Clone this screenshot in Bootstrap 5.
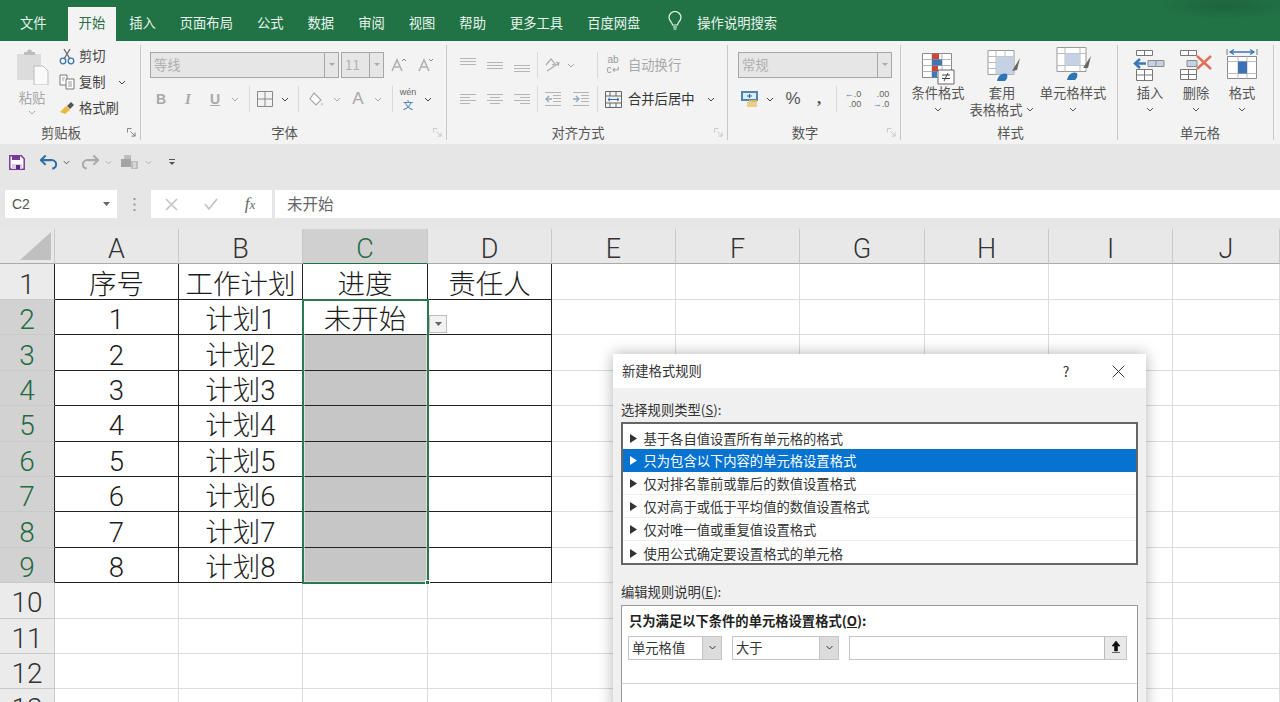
<!DOCTYPE html>
<html lang="zh-CN">
<head>
<meta charset="utf-8">
<title>新建格式规则</title>
<link href="https://cdn.jsdelivr.net/npm/bootstrap@5.3.0/dist/css/bootstrap.min.css" rel="stylesheet">
<style>
html,body{height:702px;overflow:hidden}
body{font-family:"Noto Sans CJK SC","Liberation Sans",sans-serif;font-size:13.3px;color:#444;background:#fff;line-height:1.2}
svg{display:block;flex:none}
.tabbar{height:41px;background:#217346 radial-gradient(ellipse 70px 14px at 1225px 6px,rgba(0,0,0,.14),transparent);color:#e9f3ed;padding-left:8px}
.tabitem{padding:0 12px;height:34px;line-height:31px;white-space:nowrap}
.tabitem.first{margin-right:9px}
.tabitem.on{background:#f3f3f3;color:#2c6e49;padding:0 11px;margin-right:1px}
.bulb{margin:0 15px 0 16px;height:34px}
.ribbon{height:103px;background:#f3f3f3;padding-top:4px}
.grp{height:95px;border-right:1px solid #c8c8c8;flex:none}
.g1{width:141px}.g2{width:306px}.g3{width:281px}.g4{width:173px}.g5{width:217px;padding-left:3px}.g6{width:156px;padding-left:9px}
.rowa{height:26px;margin-top:7px}
.rowb{height:26px;margin-top:8px}
.grpbody{height:80px}
.cap{height:15px;line-height:15px;margin-top:auto;color:#555}
.capt{flex:1;text-align:center}
.launch{width:18px}
.slot{display:flex;align-items:center;justify-content:center;flex:none;height:100%}
.vs{width:1px;height:26px;background:#d8d8d8;flex:none}
.combo{height:26px;background:#e6e6e6;border:1px solid #a6a6a6;color:#b0b0b0;flex:none;line-height:24px;padding-left:3px}
.comboarrow{width:14px;border-left:1px solid #a6a6a6;height:100%;margin-left:auto;flex:none}
.small-row{height:22px;margin-bottom:4px}
.big{flex:none;text-align:center;line-height:17px;color:#555}
.dis,.big.dis{color:#a8a8a8}
.bigicon{height:39px;margin-bottom:0}
.qat{height:46px;background:#e6e6e6;padding:10px 0 0 9px}
.fbar{height:28px;background:#e6e6e6}
.namebox{width:112px;margin-left:5px;background:#fff;padding:0 7px;font-family:"Liberation Sans",sans-serif;font-size:14px;color:#555}
.fbtns{width:121px;background:#fff;margin-right:3px}
.finput{background:#fff;padding-left:12px;font-size:15.5px;color:#666;line-height:26px}
.gapbar{height:11px;background:#e6e6e6}
.sheetwrap{height:473px;overflow:hidden}
.sheet{border-collapse:separate;border-spacing:0;table-layout:fixed;width:1280px;font-family:Roboto,"Noto Sans CJK SC",sans-serif;font-size:27.5px;color:#1c1c1c;font-weight:300}
.sheet td,.sheet th{padding:6px 0 0;height:35.4px;line-height:28px;text-align:center;border-right:1px solid #dcdcdc;border-bottom:1px solid #dcdcdc;font-weight:300;white-space:nowrap}
.sheet tbody tr:first-child>*{height:36px}
.sheet thead th{height:35px;background:#e8e8e8;border-right:1px solid #c9c9c9;border-bottom:1px solid #aaa;color:#333;font-size:27px;padding-top:6px}
.sheet tbody th{background:#ebebeb;border-right:1px solid #c9c9c9;border-bottom:1px solid #c9c9c9;color:#333;font-size:28px}
.sheet thead th.sel{background:#d0d0d0;color:#1f6b42;border-bottom-color:#217346}
.sheet tbody th.sel{background:#d2d2d2;color:#1f6b42}
.sheet tbody th.k{border-right-color:#222}
.sheet td.k{border-right-color:#222;border-bottom-color:#222}
.sheet td.fill{background:#c6c6c6}
.selbox{left:302px;top:70px;width:127px;height:285px;border:2px solid #2a7a50;pointer-events:none;outline:1px solid rgba(255,255,255,.4);outline-offset:-3px}
.handle{right:-3px;bottom:-3px;width:5px;height:5px;background:#217346;border:1px solid #fff}
.ddarrow{left:429px;top:86px;width:18px;height:18px;background:#f2f2f2;border:1px solid #bdbdbd}
.dialog{left:613px;top:125px;width:533px;height:360px;background:#f0f0f0;box-shadow:0 0 14px rgba(0,0,0,.3);font-size:13.3px;color:#333}
.dlgtitle{height:34px;background:#fff;padding-left:9px;padding-right:21px}
.dlghelp{width:10px;margin-right:41px;font-size:14px;text-align:center}
.dlgbody{padding:14px 8px 0 8px}
.rulelist{border:2px solid #666;border-radius:0;background:#fff;height:143px;padding-top:3px;margin-top:4px}
.rulelist .list-group-item{border:0;border-bottom:1px solid #eee;border-radius:0;padding:2px 0 0 7px;height:23px;line-height:21px;background:transparent;color:#333;font-size:13.3px;margin:0;display:flex;align-items:center}
.rulelist .list-group-item.active{background:#0573cf;color:#fff;border-color:#0573cf}
.tri{margin-right:6.500px}
.lbl2{margin-top:19px;margin-bottom:5px;height:16px;line-height:16px}
.descbox{border:1px solid #999;background:#fff;height:120px;padding:7px 0 0 0}
.desct{font-weight:700;padding-left:7px;height:16px;line-height:16px;color:#222}
.condrow{padding-left:6px;margin-top:7px;height:24px}
.cond{height:24px;border:1px solid #c4c4c4;background:#fff;padding-left:3px;line-height:22px;flex:none}
.condarr{width:19px;height:100%;margin-left:auto;background:#dcdcdc;border-left:1px solid #c4c4c4}
.upbtn{width:22px;height:100%;margin-left:auto;background:#e9e9e9;border-left:1px solid #bbb}
.descsep{margin-top:23px;border-top:1px solid #d6d6d6}
.u{text-decoration:underline}
</style>
</head>
<body>
<svg width="0" height="0" class="position-absolute">
<defs>
<symbol id="chev" viewBox="0 0 8 5"><path d="M1 1l3 3 3-3" fill="none" stroke="currentColor" stroke-width="1"/></symbol>
<symbol id="launch" viewBox="0 0 10 10"><path d="M.5 5V.5H5M4 4l5 5M9 5v4H5" fill="none" stroke="currentColor" stroke-width="1"/></symbol>
<symbol id="trig" viewBox="0 0 7 9"><path d="M0 0l7 4.500L0 9z" fill="currentColor"/></symbol>
</defs>
</svg>

<nav class="tabbar d-flex align-items-end">
  <div class="tabitem first">文件</div><div class="tabitem on">开始</div><div class="tabitem">插入</div><div class="tabitem">页面布局</div><div class="tabitem">公式</div><div class="tabitem">数据</div><div class="tabitem">审阅</div><div class="tabitem">视图</div><div class="tabitem">帮助</div><div class="tabitem">更多工具</div><div class="tabitem">百度网盘</div>
  <div class="slot bulb"><svg width="14" height="20" viewBox="0 0 14 20"><path d="M4.500 14c0-3-3.500-4-3.500-7.500a6 6 0 0 1 12 0C13 10 9.500 11 9.500 14z" fill="none" stroke="#e9f3ed" stroke-width="1.200"/><path d="M5 16h4M5.500 18h3" stroke="#a9d8bd" stroke-width="1.500"/></svg></div>
  <div class="tabitem px-0">操作说明搜索</div>
</nav>

<section class="ribbon d-flex">
  <!-- 剪贴板 -->
  <div class="grp g1 d-flex flex-column">
    <div class="grpbody d-flex">
      <div class="big dis d-flex flex-column align-items-center" style="width:46px;margin-left:9px">
        <svg width="34" height="36" viewBox="0 0 34 36" class="mt-1"><path d="M2 5h24v26H2z" fill="#dcdcdc"/><path d="M9 5V3h3a2.500 2.500 0 0 1 5 0h3v3H9z" fill="#bdbdbd"/><path d="M19 17h9l5 5v14H19z" fill="#fafafa" stroke="#bcbcbc"/></svg>
        <div style="margin-top:4px">粘贴</div>
        <svg width="8" height="5" style="margin-top:4px"><use href="#chev"/></svg>
      </div>
      <div class="ms-1">
        <div class="small-row d-flex align-items-center">
          <svg width="16" height="17" viewBox="0 0 16 17"><path d="M5 1l6 10M11 1L5 11" stroke="#666" stroke-width="1.300" fill="none"/><circle cx="4" cy="13" r="2.800" fill="none" stroke="#3c78b4" stroke-width="1.300"/><circle cx="12" cy="13" r="2.800" fill="none" stroke="#3c78b4" stroke-width="1.300"/></svg>
          <span class="ms-1">剪切</span>
        </div>
        <div class="small-row d-flex align-items-center">
          <svg width="16" height="16" viewBox="0 0 16 16"><path d="M1 1h7v10H1z" fill="#fff" stroke="#777"/><path d="M7 5h8v10H7z" fill="#fff" stroke="#777"/><path d="M3 4h3M3 6h2M9 8h4M9 10h4M9 12h4" stroke="#999"/></svg>
          <span class="ms-1">复制</span>
          <svg width="8" height="5" style="margin-left:12px"><use href="#chev"/></svg>
        </div>
        <div class="small-row d-flex align-items-center">
          <svg width="16" height="14" viewBox="0 0 16 14"><path d="M1 11l6-6 4 4-5 4z" fill="#e8b93c"/><path d="M8 5l4-4 3 3-4 4z" fill="#555"/></svg>
          <span class="ms-1">格式刷</span>
        </div>
      </div>
    </div>
    <div class="cap d-flex"><div class="capt">剪贴板</div><div class="launch slot"><svg width="9" height="9" class="text-secondary"><use href="#launch"/></svg></div></div>
  </div>

  <!-- 字体 -->
  <div class="grp g2 d-flex flex-column">
    <div class="rowa d-flex" style="padding-left:9px">
      <div class="combo d-flex" style="width:189px">等线<div class="comboarrow slot"><svg width="6" height="4"><path d="M0 0h6L3 3z" fill="#aaa"/></svg></div></div>
      <div class="combo d-flex" style="width:43px;margin-left:2px">11<div class="comboarrow slot"><svg width="6" height="4"><path d="M0 0h6L3 3z" fill="#aaa"/></svg></div></div>
      <div class="slot dis" style="width:28px;margin-left:1px"><svg width="16" height="14" viewBox="0 0 16 14"><path d="M1 13L6 2l5 11M3 9h6" fill="none" stroke="#b0b0b0" stroke-width="1.600"/><path d="M11 3l2-2 2 2" fill="none" stroke="#888"/></svg></div>
      <div class="slot dis" style="width:26px"><svg width="16" height="14" viewBox="0 0 16 14"><path d="M1 13L6 2l5 11M3 9h6" fill="none" stroke="#b0b0b0" stroke-width="1.600"/><path d="M11 1l2 2 2-2" fill="none" stroke="#888"/></svg></div>
    </div>
    <div class="rowb d-flex" style="padding-left:7px">
      <div class="slot fw-bold dis" style="width:26px;font-family:'Liberation Sans',sans-serif;font-size:14px">B</div>
      <div class="slot fst-italic dis" style="width:28px;font-family:'Liberation Serif',serif;font-size:15px;font-weight:700">I</div>
      <div class="slot dis text-decoration-underline" style="width:26px;font-family:'Liberation Sans',sans-serif;font-size:14px;font-weight:700">U</div>
      <div class="slot dis" style="width:14px"><svg width="8" height="5"><use href="#chev"/></svg></div>
      <div class="vs" style="margin-left:7px"></div>
      <div class="slot" style="width:30px"><svg width="16" height="16" viewBox="0 0 16 16"><path d="M.5.5h15v15H.5zM8 .5v15M.5 8h15" fill="none" stroke="#888"/></svg></div>
      <div class="slot" style="width:10px"><svg width="8" height="5"><use href="#chev"/></svg></div>
      <div class="vs" style="margin-left:8px"></div>
      <div class="slot" style="width:34px"><svg width="16" height="15" viewBox="0 0 16 15"><path d="M6 1l7 7-5 5-6-6z" fill="#fff" stroke="#aaa" stroke-width="1.200"/><path d="M14 10c1 2 1.500 3 0 3.500-1.500-.5-1-1.500 0-3.500z" fill="#c8c8c8"/></svg></div>
      <div class="slot dis" style="width:8px"><svg width="8" height="5"><use href="#chev"/></svg></div>
      <div class="slot dis" style="width:26px;margin-left:4px;font-family:'Liberation Sans',sans-serif;font-size:17px">A</div>
      <div class="slot dis" style="width:10px;margin-left:2px"><svg width="8" height="5"><use href="#chev"/></svg></div>
      <div class="vs" style="margin-left:9px"></div>
      <div class="slot flex-column" style="width:30px;font-family:'Liberation Sans',sans-serif;font-size:9px;line-height:10px;color:#666">wén<span style="color:#3f76ad;font-family:'Noto Sans CJK SC',sans-serif;font-size:10.500px;line-height:15px">文</span></div>
      <div class="slot" style="width:10px"><svg width="8" height="5"><use href="#chev"/></svg></div>
    </div>
    <div class="cap d-flex"><div class="capt">字体</div><div class="launch slot"><svg width="9" height="9" style="color:#c4c4c4"><use href="#launch"/></svg></div></div>
  </div>

  <!-- 对齐方式 -->
  <div class="grp g3 d-flex flex-column">
    <div class="rowa d-flex" style="padding-left:7px">
      <div class="slot" style="width:27px"><svg width="16" height="16" viewBox="0 0 16 16"><path d="M0 1.500h16M0 4.500h16M0 7.500h16" stroke="#b5b5b5"/></svg></div>
      <div class="slot" style="width:27px"><svg width="16" height="16" viewBox="0 0 16 16"><path d="M0 5.500h16M0 8.500h16M0 11.500h16" stroke="#b5b5b5"/></svg></div>
      <div class="slot" style="width:27px"><svg width="16" height="16" viewBox="0 0 16 16"><path d="M0 8.500h16M0 11.500h16M0 14.500h16" stroke="#b5b5b5"/></svg></div>
      <div class="vs" style="margin-left:2px"></div>
      <div class="slot" style="width:28px"><svg width="16" height="15" viewBox="0 0 16 15"><path d="M2 7l5-6 4 5-3 1M3 13L15 5M12 4l3 1-1 3" fill="none" stroke="#aaa" stroke-width="1.200"/></svg></div>
      <div class="slot dis" style="width:10px"><svg width="8" height="5"><use href="#chev"/></svg></div>
      <div class="vs" style="margin-left:21px"></div>
      <div class="slot" style="width:30px;font-size:10px;line-height:10px;color:#999"><span class="d-block text-center" style="font-family:'Liberation Sans',sans-serif">ab<br>c↵</span></div>
      <span class="dis slot">自动换行</span>
    </div>
    <div class="rowb d-flex" style="padding-left:7px">
      <div class="slot" style="width:27px"><svg width="16" height="12" viewBox="0 0 16 12"><path d="M0 1.500h16M0 4.500h10M0 7.500h16M0 10.500h10" stroke="#b5b5b5"/></svg></div>
      <div class="slot" style="width:27px"><svg width="16" height="12" viewBox="0 0 16 12"><path d="M0 1.500h16M3 4.500h10M0 7.500h16M3 10.500h10" stroke="#b5b5b5"/></svg></div>
      <div class="slot" style="width:27px"><svg width="16" height="12" viewBox="0 0 16 12"><path d="M0 1.500h16M6 4.500h10M0 7.500h16M6 10.500h10" stroke="#b5b5b5"/></svg></div>
      <div class="vs" style="margin-left:2px"></div>
      <div class="slot" style="width:29px"><svg width="16" height="14" viewBox="0 0 16 14"><path d="M0 .5h16M8 3.500h8M8 6.500h8M8 9.500h8M0 13.500h16" stroke="#b5b5b5"/><path d="M7 7H1M4 4L1 7l3 3" fill="none" stroke="#8fa9c4" stroke-width="1.300"/></svg></div>
      <div class="slot" style="width:27px"><svg width="16" height="14" viewBox="0 0 16 14"><path d="M0 .5h16M8 3.500h8M8 6.500h8M8 9.500h8M0 13.500h16" stroke="#b5b5b5"/><path d="M0 7h6M3 4l3 3-3 3" fill="none" stroke="#8fa9c4" stroke-width="1.300"/></svg></div>
      <div class="vs" style="margin-left:3px"></div>
      <div class="slot" style="width:30px"><svg width="17" height="17" viewBox="0 0 17 17"><path d="M.5.5h16v16H.5zM.5 5h16M.5 12h16M5 .5V5M11 .5V5M5 12v4.500M11 12v4.500" fill="none" stroke="#666"/><path d="M3 8.500h11M5 6.800L3 8.500l2 1.700M12 6.800l2 1.700-2 1.700" fill="none" stroke="#2f6ea8"/></svg></div>
      <span class="slot" style="color:#333">合并后居中</span>
      <div class="slot" style="width:10px;margin-left:12px"><svg width="8" height="5"><use href="#chev"/></svg></div>
    </div>
    <div class="cap d-flex"><div class="capt">对齐方式</div><div class="launch slot"><svg width="9" height="9" style="color:#c4c4c4"><use href="#launch"/></svg></div></div>
  </div>

  <!-- 数字 -->
  <div class="grp g4 d-flex flex-column">
    <div class="rowa d-flex" style="padding-left:10px">
      <div class="combo d-flex" style="width:154px">常规<div class="comboarrow slot"><svg width="6" height="4"><path d="M0 0h6L3 3z" fill="#aaa"/></svg></div></div>
    </div>
    <div class="rowb d-flex" style="padding-left:8px">
      <div class="slot" style="width:28px"><svg width="18" height="17" viewBox="0 0 18 17"><path d="M0 0h17v10H0z" fill="#4f86ae"/><path d="M2 2h13v6H2z" fill="#dcecf5"/><path d="M6 5h5M8.500 3v4" stroke="#2f6188"/><path d="M6 11h10v5H6z" fill="#e8cf90"/><path d="M8 9h8v2H8z" fill="#d8b96a"/></svg></div>
      <div class="slot" style="width:12px"><svg width="8" height="5"><use href="#chev"/></svg></div>
      <div class="slot" style="width:34px;font-family:'Liberation Sans',sans-serif;font-size:17px;color:#555">%</div>
      <div class="slot fw-bold" style="width:18px;font-family:'Liberation Serif',serif;font-size:17px;color:#555">,</div>
      <div class="vs" style="margin-left:8px"></div>
      <div class="slot" style="width:32px;font-family:'Liberation Sans',sans-serif;font-size:9px;line-height:10px;color:#666"><span class="text-end"><span style="color:#4a7fae">←</span>.0<br>.00</span></div>
      <div class="slot" style="width:24px;font-family:'Liberation Sans',sans-serif;font-size:9px;line-height:10px;color:#666"><span class="text-end">.00<br><span style="color:#4a7fae">→</span>.0</span></div>
    </div>
    <div class="cap d-flex"><div class="capt">数字</div><div class="launch slot"><svg width="9" height="9" style="color:#c4c4c4"><use href="#launch"/></svg></div></div>
  </div>

  <!-- 样式 -->
  <div class="grp g5 d-flex flex-column">
    <div class="grpbody d-flex">
      <div class="big d-flex flex-column align-items-center" style="width:68px">
        <div class="bigicon"><svg width="34" height="36" viewBox="0 0 34 36" style="margin-top:7px"><path d="M1.500 1.500h29v24h-29z" fill="#fff" stroke="#8a8a8a"/><path d="M11 1.500v24M21 1.500v24M1.500 7.500h29M1.500 13.500h29M1.500 19.500h29" stroke="#b5b5b5" fill="none"/><path d="M11 1.500h7v6h-7zM11 13.500h6v6h-6z" fill="#c9483a"/><path d="M11 7.500h10v6H11zM11 19.500h5v6h-5z" fill="#3c78b4"/><path d="M17 18h16v14H17z" fill="#fff" stroke="#666"/><path d="M21 23h8M21 26.500h8M27 21l-4 8" stroke="#444" fill="none"/></svg></div>
        <div>条件格式</div>
        <svg width="8" height="5" style="margin-top:6px"><use href="#chev"/></svg>
      </div>
      <div class="big d-flex flex-column align-items-center" style="width:60px">
        <div class="bigicon"><svg width="34" height="36" viewBox="0 0 34 36" style="margin:4px 0 0 4px"><path d="M1 1.500h26v24H1z" fill="#fff" stroke="#999"/><path d="M9 1.500v24M18 1.500v24M1 7.500h26M1 13.500h26M1 19.500h26" stroke="#bbb" fill="none"/><path d="M9 7.500h18v18H9z" fill="#c4d2e4"/><path d="M25 22L33 9l-3 12z" fill="#666"/><path d="M10 32c1-6 6-9 10-7 1 3 0 5-2 7z" fill="#2f74b5"/></svg></div>
        <div>套用</div>
        <div class="d-flex align-items-center text-nowrap" style="margin-left:-1px">表格格式<svg width="8" height="5" style="margin-left:3px"><use href="#chev"/></svg></div>
      </div>
      <div class="big d-flex flex-column align-items-center" style="width:82px">
        <div class="bigicon"><svg width="36" height="36" viewBox="0 0 36 36" style="margin-left:2px"><path d="M1 2.500h29v24H1z" fill="#fff" stroke="#999"/><path d="M1 8.500h29M9 2.500v24M24 2.500v24M1 20.500h29" stroke="#bbb" fill="none"/><path d="M9 8.500h15v12H9z" fill="#c4d2e4"/><path d="M27 23L35 11l-3 12z" fill="#666"/><path d="M11 35c1-6 6-9 10-7 1 3 0 5-2 7z" fill="#2f74b5"/></svg></div>
        <div>单元格样式</div>
        <svg width="8" height="5" style="margin-top:6px"><use href="#chev"/></svg>
      </div>
    </div>
    <div class="cap d-flex"><div class="capt">样式</div></div>
  </div>

  <!-- 单元格 -->
  <div class="grp g6 d-flex flex-column">
    <div class="grpbody d-flex">
      <div class="big d-flex flex-column align-items-center" style="width:46px">
        <div class="bigicon"><svg width="34" height="34" viewBox="0 0 34 34" style="margin-top:4px"><path d="M3.500 1.500h16v5h-16zM11.500 1.500v5M3.500 20.500h16v11h-16zM11.500 20.500v11M3.500 26h16" fill="#fff" stroke="#777"/><path d="M15 11.500h16v6H15zM23 11.500v6" fill="#c4d2e4" stroke="#8a8a8a"/><path d="M13 14.500H2M7 10l-5 4.500L7 19" fill="none" stroke="#3a78b8" stroke-width="2.500"/></svg></div>
        <div>插入</div>
        <svg width="8" height="5" style="margin-top:6px"><use href="#chev"/></svg>
      </div>
      <div class="big d-flex flex-column align-items-center" style="width:46px">
        <div class="bigicon"><svg width="34" height="34" viewBox="0 0 34 34" style="margin-top:4px"><path d="M1.500 1.500h16v5h-16zM9.500 1.500v5M1.500 20.500h16v10h-16zM9.500 20.500v10M1.500 25.500h16" fill="#fff" stroke="#777"/><path d="M8 11.500h10v6H8z" fill="#c4d2e4" stroke="#8a8a8a"/><path d="M18 7l14 13M32 7L18 20" stroke="#e0705a" stroke-width="2.400"/></svg></div>
        <div>删除</div>
        <svg width="8" height="5" style="margin-top:6px"><use href="#chev"/></svg>
      </div>
      <div class="big d-flex flex-column align-items-center" style="width:46px">
        <div class="bigicon"><svg width="32" height="36" viewBox="0 0 32 36" style="margin-top:2px"><path d="M1 2v6M31 2v6" stroke="#777"/><path d="M4 5h24M8 2.500L4 5l4 2.500M24 2.500L28 5l-4 2.500" fill="none" stroke="#3a78b8" stroke-width="1.300"/><path d="M1.500 9.500h29v22h-29z" fill="#fff" stroke="#8a8a8a"/><path d="M1.500 14.500h29M1.500 26.500h29M12 9.500v22M21 9.500v22" stroke="#bbb"/><path d="M12 14.500h9v12h-9z" fill="#3d72b4"/></svg></div>
        <div>格式</div>
        <svg width="8" height="5" style="margin-top:6px"><use href="#chev"/></svg>
      </div>
    </div>
    <div class="cap d-flex"><div class="capt">单元格</div></div>
  </div>
</section>

<div class="qat d-flex align-items-start">
  <div class="slot" style="width:16px;height:16px"><svg width="16" height="15" viewBox="0 0 16 15"><path d="M.8.8h11.500l2.900 2.900v10.500H.8z" fill="#fff" stroke="#7a3a9a" stroke-width="1.500"/><path d="M3 1h8v4H3z" fill="#7a3a9a"/><path d="M3 9h10v5H3z" fill="#e0c8ea"/><path d="M7 10h4v4H7z" fill="#5a2a7a"/></svg></div>
  <div class="slot" style="width:18px;height:16px;margin-left:14px"><svg width="17" height="15" viewBox="0 0 18 15"><path d="M2 5h9a5 4.500 0 0 1 2 9" fill="none" stroke="#2f6ea8" stroke-width="2.200"/><path d="M6 0L1 5l5 5" fill="none" stroke="#2f6ea8" stroke-width="2.200"/></svg></div>
  <div class="slot" style="width:8px;height:16px;margin-left:5px"><svg width="7" height="5"><use href="#chev"/></svg></div>
  <div class="slot" style="width:18px;height:16px;margin-left:11px"><svg width="17" height="15" viewBox="0 0 18 15"><path d="M16 5H7a5 4.500 0 0 0-2 9" fill="none" stroke="#aaa" stroke-width="2.200"/><path d="M12 0l5 5-5 5" fill="none" stroke="#aaa" stroke-width="2.200"/></svg></div>
  <div class="slot dis" style="width:8px;height:16px;margin-left:5px"><svg width="7" height="5"><use href="#chev"/></svg></div>
  <div class="slot" style="width:18px;height:16px;margin-left:9px"><svg width="18" height="16" viewBox="0 0 18 16"><path d="M0 5h10v8H0z" fill="#a5a5a5"/><path d="M3 1h7v4H3zM10 7h7v8h-7z" fill="#bdbdbd"/><path d="M12 9h3M12 11h3M12 13h3" stroke="#eee"/></svg></div>
  <div class="slot dis" style="width:8px;height:16px;margin-left:5px"><svg width="7" height="5"><use href="#chev"/></svg></div>
  <div class="slot" style="width:8px;height:16px;margin-left:16px"><svg width="6" height="7" viewBox="0 0 6 7"><path d="M0 .5h6" stroke="#555"/><path d="M0 3h6L3 6z" fill="#555"/></svg></div>
</div>

<div class="fbar d-flex">
  <div class="namebox d-flex align-items-center">C2<svg width="7" height="4" class="ms-auto"><path d="M0 0h7L3.500 4z" fill="#666"/></svg></div>
  <div class="slot" style="width:34px"><svg width="3" height="13" viewBox="0 0 3 13"><path d="M1.500 0v2M1.500 5.500v2M1.500 11v2" stroke="#999" stroke-width="2"/></svg></div>
  <div class="fbtns d-flex align-items-center">
    <div class="slot" style="width:40px"><svg width="13" height="13" viewBox="0 0 13 13"><path d="M1 1l11 11M12 1L1 12" stroke="#c4c4c4" stroke-width="1.600"/></svg></div>
    <div class="slot" style="width:40px"><svg width="14" height="12" viewBox="0 0 14 12"><path d="M1 6l4 5 8-10" fill="none" stroke="#c4c4c4" stroke-width="1.800"/></svg></div>
    <div class="slot" style="width:38px;font-family:'Liberation Serif',serif;font-style:italic;font-size:17px;color:#666"><span>f<span style="font-size:13px">x</span></span></div>
  </div>
  <div class="finput flex-grow-1">未开始</div>
</div>
<div class="gapbar"></div>

<main class="sheetwrap position-relative">
  <table class="sheet">
    <colgroup><col style="width:55px"><col style="width:124px"><col style="width:124px"><col style="width:125px"><col style="width:124px"><col style="width:124px"><col style="width:124px"><col style="width:125px"><col style="width:124px"><col style="width:124px"><col></colgroup>
    <thead>
      <tr><th class="position-relative"><svg width="32" height="29" viewBox="0 0 32 29" class="position-absolute" style="right:2px;bottom:2px"><path d="M31 0v28H0z" fill="#c0c0c0"/></svg></th><th>A</th><th>B</th><th class="sel">C</th><th>D</th><th>E</th><th>F</th><th>G</th><th>H</th><th>I</th><th>J</th></tr>
    </thead>
    <tbody>
      <tr><th class="k">1</th><td class="k">序号</td><td class="k">工作计划</td><td class="k">进度</td><td class="k">责任人</td><td></td><td></td><td></td><td></td><td></td><td></td></tr>
      <tr><th class="sel k">2</th><td class="k">1</td><td class="k">计划1</td><td class="k">未开始</td><td class="k"></td><td></td><td></td><td></td><td></td><td></td><td></td></tr>
      <tr><th class="sel k">3</th><td class="k">2</td><td class="k">计划2</td><td class="k fill"></td><td class="k"></td><td></td><td></td><td></td><td></td><td></td><td></td></tr>
      <tr><th class="sel k">4</th><td class="k">3</td><td class="k">计划3</td><td class="k fill"></td><td class="k"></td><td></td><td></td><td></td><td></td><td></td><td></td></tr>
      <tr><th class="sel k">5</th><td class="k">4</td><td class="k">计划4</td><td class="k fill"></td><td class="k"></td><td></td><td></td><td></td><td></td><td></td><td></td></tr>
      <tr><th class="sel k">6</th><td class="k">5</td><td class="k">计划5</td><td class="k fill"></td><td class="k"></td><td></td><td></td><td></td><td></td><td></td><td></td></tr>
      <tr><th class="sel k">7</th><td class="k">6</td><td class="k">计划6</td><td class="k fill"></td><td class="k"></td><td></td><td></td><td></td><td></td><td></td><td></td></tr>
      <tr><th class="sel k">8</th><td class="k">7</td><td class="k">计划7</td><td class="k fill"></td><td class="k"></td><td></td><td></td><td></td><td></td><td></td><td></td></tr>
      <tr><th class="sel k">9</th><td class="k">8</td><td class="k">计划8</td><td class="k fill"></td><td class="k"></td><td></td><td></td><td></td><td></td><td></td><td></td></tr>
      <tr><th>10</th><td></td><td></td><td></td><td></td><td></td><td></td><td></td><td></td><td></td><td></td></tr>
      <tr><th>11</th><td></td><td></td><td></td><td></td><td></td><td></td><td></td><td></td><td></td><td></td></tr>
      <tr><th>12</th><td></td><td></td><td></td><td></td><td></td><td></td><td></td><td></td><td></td><td></td></tr>
      <tr><th>13</th><td></td><td></td><td></td><td></td><td></td><td></td><td></td><td></td><td></td><td></td></tr>
    </tbody>
  </table>

  <div class="selbox position-absolute"><div class="handle position-absolute"></div></div>
  <div class="ddarrow position-absolute d-flex align-items-center justify-content-center"><svg width="7" height="4"><path d="M0 0h7L3.500 4z" fill="#666"/></svg></div>

  <div class="dialog position-absolute" role="dialog" aria-label="新建格式规则">
    <div class="dlgtitle d-flex align-items-center">
      <span class="me-auto">新建格式规则</span>
      <span class="dlghelp">?</span>
      <svg width="13" height="13" viewBox="0 0 13 13"><path d="M.7.700l11.600 11.600M12.300.700L.7 12.300" stroke="#333"/></svg>
    </div>
    <div class="dlgbody">
      <div>选择规则类型(<span class="u">S</span>):</div>
      <div class="list-group rulelist">
        <div class="list-group-item"><svg class="tri" width="7" height="9"><use href="#trig"/></svg>基于各自值设置所有单元格的格式</div>
        <div class="list-group-item active"><svg class="tri" width="7" height="9"><use href="#trig"/></svg>只为包含以下内容的单元格设置格式</div>
        <div class="list-group-item"><svg class="tri" width="7" height="9"><use href="#trig"/></svg>仅对排名靠前或靠后的数值设置格式</div>
        <div class="list-group-item"><svg class="tri" width="7" height="9"><use href="#trig"/></svg>仅对高于或低于平均值的数值设置格式</div>
        <div class="list-group-item"><svg class="tri" width="7" height="9"><use href="#trig"/></svg>仅对唯一值或重复值设置格式</div>
        <div class="list-group-item border-0"><svg class="tri" width="7" height="9"><use href="#trig"/></svg>使用公式确定要设置格式的单元格</div>
      </div>
      <div class="lbl2">编辑规则说明(<span class="u">E</span>):</div>
      <div class="descbox">
        <div class="desct">只为满足以下条件的单元格设置格式(<span class="u">O</span>):</div>
        <div class="condrow d-flex">
          <div class="cond d-flex" style="width:94px">单元格值<div class="condarr slot"><svg width="9" height="5"><use href="#chev"/></svg></div></div>
          <div class="cond d-flex" style="width:107px;margin-left:10px">大于<div class="condarr slot"><svg width="9" height="5"><use href="#chev"/></svg></div></div>
          <div class="cond d-flex" style="width:278px;margin-left:10px"><div class="upbtn slot"><svg width="10" height="13" viewBox="0 0 10 13"><path d="M5 0l4 5H6.500v5h-3V5H1zM1 11.500h8" fill="#111" stroke="#111" stroke-width=".6"/></svg></div></div>
        </div>
        <div class="descsep"></div>
      </div>
    </div>
  </div>
</main>
<script src="https://cdn.jsdelivr.net/npm/bootstrap@5.3.0/dist/js/bootstrap.bundle.min.js"></script>
</body>
</html>
